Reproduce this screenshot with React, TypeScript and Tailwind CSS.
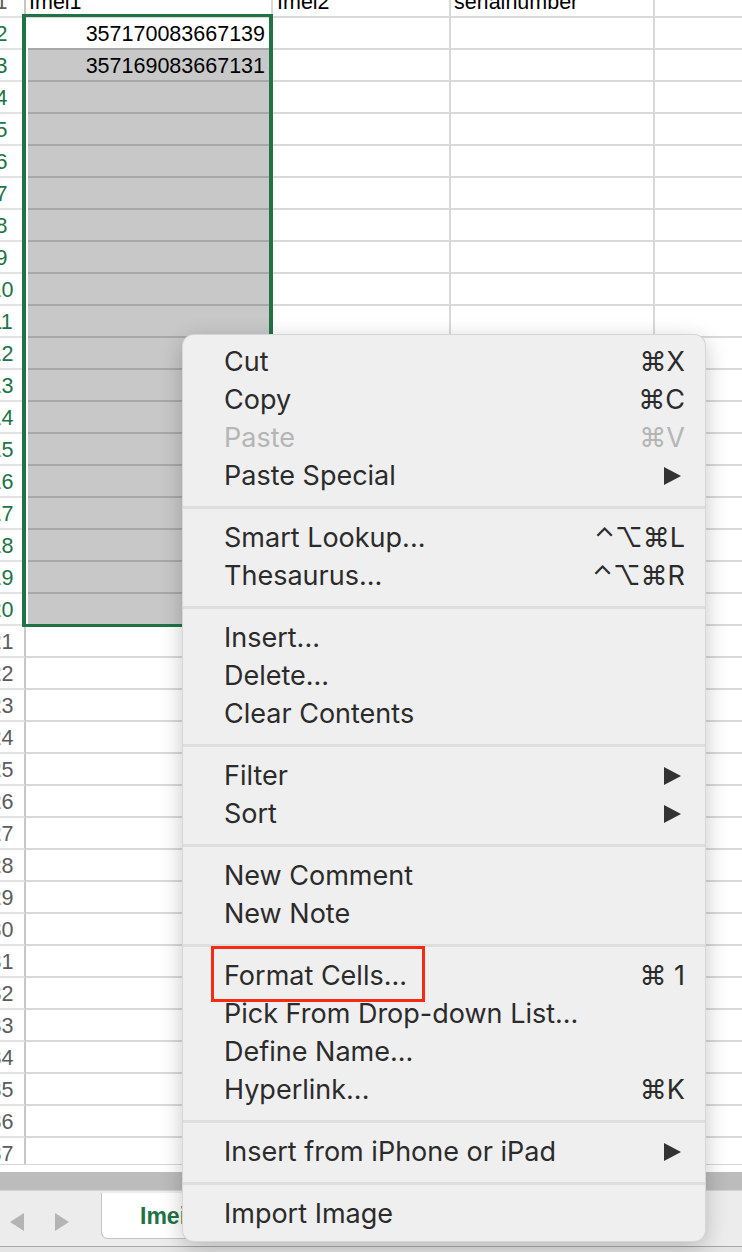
import React from 'react'

interface MenuItem {
  label: string
  shortcut?: string
  submenu?: boolean
  disabled?: boolean
  boxed?: boolean
}

const menuGroups: MenuItem[][] = [
  [
    { label: 'Cut', shortcut: '⌘X' },
    { label: 'Copy', shortcut: '⌘C' },
    { label: 'Paste', shortcut: '⌘V', disabled: true },
    { label: 'Paste Special', submenu: true },
  ],
  [
    { label: 'Smart Lookup...', shortcut: '⌃⌥⌘L' },
    { label: 'Thesaurus...', shortcut: '⌃⌥⌘R' },
  ],
  [{ label: 'Insert...' }, { label: 'Delete...' }, { label: 'Clear Contents' }],
  [
    { label: 'Filter', submenu: true },
    { label: 'Sort', submenu: true },
  ],
  [{ label: 'New Comment' }, { label: 'New Note' }],
  [
    { label: 'Format Cells...', shortcut: '⌘ 1', boxed: true },
    { label: 'Pick From Drop-down List...' },
    { label: 'Define Name...' },
    { label: 'Hyperlink...', shortcut: '⌘K' },
  ],
  [{ label: 'Insert from iPhone or iPad', submenu: true }],
  [{ label: 'Import Image' }],
]

const rowNumbers = Array.from({ length: 37 }, (_, i) => i + 1)

const cellFont = { fontFamily: '"Liberation Sans", Arial, sans-serif' }
const menuFont = { fontFamily: 'Inter, "DejaVu Sans", sans-serif' }

function SheetRow({ n }: { n: number }) {
  const selected = n >= 2 && n <= 20
  const header = n === 1
  const values: Record<number, string> = { 2: '357170083667139', 3: '357169083667131' }

  return (
    <div className="flex h-[32px] text-[21.5px] text-black">
      <div
        className={`w-[47px] shrink-0 flex items-center justify-center pt-[2px] border-r-2 border-r-[#c6c6c6] border-b-2 border-b-[#e2e2e2] ${
          selected ? 'text-[#217346]' : 'text-[#5c5c5c]'
        }`}
      >
        {n}
      </div>

      {selected ? (
        <div className="w-[247px] shrink-0 flex pl-[2px] border-r-2 border-[#d9d9d9]">
          <div
            className={`flex-1 flex items-center justify-end pr-[6px] pt-[2px] border-b-2 border-[#a8a8a8] ${
              n === 2 ? 'bg-white' : 'bg-[#c8c8c8]'
            }`}
          >
            {values[n] ?? ''}
          </div>
        </div>
      ) : (
        <div className="w-[247px] shrink-0 flex items-center pl-[3px] pt-[2px] border-r-2 border-b-2 border-[#d9d9d9]">
          {header ? 'Imei1' : ''}
        </div>
      )}

      <div className="w-[178px] shrink-0 flex items-center pl-[4px] pt-[2px] border-r-2 border-b-2 border-[#d9d9d9]">
        {header ? 'Imei2' : ''}
      </div>
      <div className="w-[204px] shrink-0 flex items-center pl-[3px] pt-[2px] border-r-2 border-b-2 border-[#d9d9d9]">
        {header ? 'serialnumber' : ''}
      </div>
      <div className="w-[120px] shrink-0 border-b-2 border-[#d9d9d9]" />
    </div>
  )
}

function ContextMenu() {
  return (
    <div
      className="absolute left-[182px] top-[334px] w-[524px] py-[8px] rounded-[12px] bg-[#efefef] border border-black/10 shadow-[0_6px_22px_rgba(0,0,0,0.22)] text-[27px]"
      style={menuFont}
    >
      {menuGroups.map((group, gi) => (
        <div key={gi}>
          {gi > 0 && (
            <div className="h-[24px] flex items-center">
              <div className="w-full h-[3px] bg-[#dedede]" />
            </div>
          )}
          {group.map((item) => (
            <div
              key={item.label}
              className={`relative h-[38px] flex items-center pl-[41px] pr-[20px] ${
                item.disabled ? 'text-[#b5b5b5]' : 'text-[#2b2b2b]'
              }`}
            >
              <span className="flex-1 whitespace-nowrap">{item.label}</span>
              {item.shortcut && <span className="whitespace-pre">{item.shortcut}</span>}
              {item.submenu && (
                <svg width="17" height="18" viewBox="0 0 17 18" className="mr-[4px]">
                  <polygon points="0,0 17,9 0,18" fill="#333333" />
                </svg>
              )}
              {item.boxed && (
                <div className="absolute left-[28px] top-[-11px] w-[214px] h-[56px] border-[3px] border-[#f52b13]" />
              )}
            </div>
          ))}
        </div>
      ))}
    </div>
  )
}

export default function App() {
  return (
    <div className="relative w-[742px] h-[1252px] overflow-hidden bg-white" style={cellFont}>
      <div className="h-[1165px] overflow-hidden border-b border-[#d6d6d6]">
        <div className="-mt-[14px] -ml-[21px]">
          {rowNumbers.map((n) => (
            <SheetRow key={n} n={n} />
          ))}
        </div>
      </div>

      {/* scroll bar */}
      <div className="h-[7px] bg-white" />
      <div className="h-[18px] bg-[#bcbcbc]" />

      {/* sheet tabs */}
      <div className="h-[56px] bg-[#ececec] border-t border-[#d4d4d4] flex">
        <div className="w-[101px] shrink-0 flex items-center pt-[6px]">
          <svg width="14" height="18" viewBox="0 0 14 18" className="ml-[10px]">
            <polygon points="14,0 0,9 14,18" fill="#b4b4b4" />
          </svg>
          <svg width="14" height="18" viewBox="0 0 14 18" className="ml-[31px]">
            <polygon points="0,0 14,9 0,18" fill="#b4b4b4" />
          </svg>
        </div>
        <div className="w-[220px] h-[46px] mt-[2px] bg-white border border-t-0 border-[#c4c4c4] rounded-b-[7px] flex items-center pl-[38px] pt-[2px]">
          <span className="text-[23px] font-bold text-[#217346]">Imei</span>
        </div>
      </div>
      <div className="h-[1px] bg-[#a8a8a8]" />
      <div className="h-[5px] bg-[#e4e4e4]" />

      {/* selection border */}
      <div className="absolute left-[22px] top-[14px] w-[251px] h-[613px] border-x-4 border-y-[3px] border-[#217346]" />

      <ContextMenu />
    </div>
  )
}
